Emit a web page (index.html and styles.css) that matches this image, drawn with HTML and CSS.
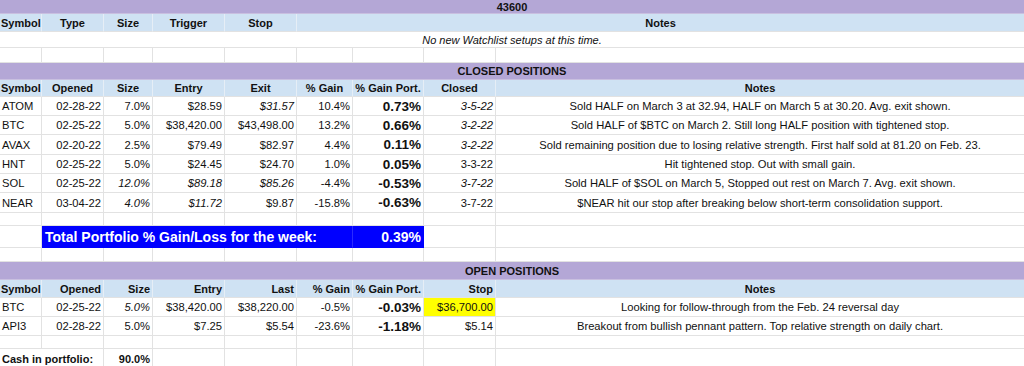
FILE: index.html
```html
<!DOCTYPE html>
<html lang="en">
<head>
<meta charset="utf-8">
<title>43600</title>
<link rel="stylesheet" href="styles.css">
</head>
<body>
<div class="sheet">
  <div class="row h14"><div class="cell purple ctr b s9">43600</div></div>
  <div class="row h18 head">
    <div class="cell l b">Symbol</div>
    <div class="cell ctr b">Type</div>
    <div class="cell ctr b">Size</div>
    <div class="cell ctr b">Trigger</div>
    <div class="cell ctr b">Stop</div>
    <div class="cell ctr b s4">Notes</div>
  </div>
  <div class="row h16"><div class="cell ctr i s9">No new Watchlist setups at this time.</div></div>
  <div class="row h15">
    <div class="cell"></div><div class="cell"></div><div class="cell"></div><div class="cell"></div><div class="cell"></div><div class="cell"></div><div class="cell"></div><div class="cell"></div><div class="cell"></div>
  </div>

  <div class="row h17"><div class="cell purple ctr b s9">CLOSED POSITIONS</div></div>
  <div class="row h17 head">
    <div class="cell l b">Symbol</div>
    <div class="cell ctr b">Opened</div>
    <div class="cell ctr b">Size</div>
    <div class="cell ctr b">Entry</div>
    <div class="cell ctr b">Exit</div>
    <div class="cell ctr b">% Gain</div>
    <div class="cell ctr b">% Gain Port.</div>
    <div class="cell ctr b">Closed</div>
    <div class="cell ctr b">Notes</div>
  </div>
  <div class="row h19 data">
    <div class="cell l">ATOM</div><div class="cell r">02-28-22</div><div class="cell r">7.0%</div><div class="cell r">$28.59</div><div class="cell r i">$31.57</div><div class="cell r">10.4%</div><div class="cell r big">0.73%</div><div class="cell r i">3-5-22</div>
    <div class="cell ctr">Sold HALF on March 3 at 32.94, HALF on March 5 at 30.20. Avg. exit shown.</div>
  </div>
  <div class="row h19 data">
    <div class="cell l">BTC</div><div class="cell r">02-25-22</div><div class="cell r">5.0%</div><div class="cell r">$38,420.00</div><div class="cell r">$43,498.00</div><div class="cell r">13.2%</div><div class="cell r big">0.66%</div><div class="cell r i">3-2-22</div>
    <div class="cell ctr">Sold HALF of $BTC on March 2. Still long HALF position with tightened stop.</div>
  </div>
  <div class="row h20 data">
    <div class="cell l">AVAX</div><div class="cell r">02-20-22</div><div class="cell r">2.5%</div><div class="cell r">$79.49</div><div class="cell r">$82.97</div><div class="cell r">4.4%</div><div class="cell r big">0.11%</div><div class="cell r i">3-2-22</div>
    <div class="cell ctr">Sold remaining position due to losing relative strength. First half sold at 81.20 on Feb. 23.</div>
  </div>
  <div class="row h19 data">
    <div class="cell l">HNT</div><div class="cell r">02-25-22</div><div class="cell r">5.0%</div><div class="cell r">$24.45</div><div class="cell r">$24.70</div><div class="cell r">1.0%</div><div class="cell r big">0.05%</div><div class="cell r">3-3-22</div>
    <div class="cell ctr">Hit tightened stop. Out with small gain.</div>
  </div>
  <div class="row h19 data">
    <div class="cell l">SOL</div><div class="cell r">02-25-22</div><div class="cell r i">12.0%</div><div class="cell r i">$89.18</div><div class="cell r i">$85.26</div><div class="cell r">-4.4%</div><div class="cell r big">-0.53%</div><div class="cell r i">3-7-22</div>
    <div class="cell ctr">Sold HALF of $SOL on March 5, Stopped out rest on March 7. Avg. exit shown.</div>
  </div>
  <div class="row h20 data">
    <div class="cell l">NEAR</div><div class="cell r">03-04-22</div><div class="cell r i">4.0%</div><div class="cell r i">$11.72</div><div class="cell r">$9.87</div><div class="cell r">-15.8%</div><div class="cell r big">-0.63%</div><div class="cell r">3-7-22</div>
    <div class="cell ctr">$NEAR hit our stop after breaking below short-term consolidation support.</div>
  </div>
  <div class="row h13">
    <div class="cell"></div><div class="cell"></div><div class="cell"></div><div class="cell"></div><div class="cell"></div><div class="cell"></div><div class="cell"></div><div class="cell"></div><div class="cell"></div>
  </div>
  <div class="row h22">
    <div class="cell"></div>
    <div class="cell blue total-label s5">Total Portfolio % Gain/Loss for the week:</div>
    <div class="cell blue total-value r">0.39%</div>
    <div class="cell"></div>
    <div class="cell"></div>
  </div>
  <div class="row h14">
    <div class="cell"></div><div class="cell"></div><div class="cell"></div><div class="cell"></div><div class="cell"></div><div class="cell"></div><div class="cell"></div><div class="cell"></div><div class="cell"></div>
  </div>

  <div class="row h18"><div class="cell purple ctr b s9">OPEN POSITIONS</div></div>
  <div class="row h18 head">
    <div class="cell l b">Symbol</div>
    <div class="cell r b">Opened</div>
    <div class="cell r b">Size</div>
    <div class="cell r b">Entry</div>
    <div class="cell r b">Last</div>
    <div class="cell r b">% Gain</div>
    <div class="cell r b">% Gain Port.</div>
    <div class="cell r b">Stop</div>
    <div class="cell ctr b">Notes</div>
  </div>
  <div class="row h19 data">
    <div class="cell l">BTC</div><div class="cell r">02-25-22</div><div class="cell r i">5.0%</div><div class="cell r">$38,420.00</div><div class="cell r">$38,220.00</div><div class="cell r">-0.5%</div><div class="cell r big">-0.03%</div><div class="cell r yellow">$36,700.00</div>
    <div class="cell ctr">Looking for follow-through from the Feb. 24 reversal day</div>
  </div>
  <div class="row h19 data">
    <div class="cell l">API3</div><div class="cell r">02-28-22</div><div class="cell r">5.0%</div><div class="cell r">$7.25</div><div class="cell r">$5.54</div><div class="cell r">-23.6%</div><div class="cell r big">-1.18%</div><div class="cell r">$5.14</div>
    <div class="cell ctr">Breakout from bullish pennant pattern. Top relative strength on daily chart.</div>
  </div>
  <div class="row h13">
    <div class="cell"></div><div class="cell"></div><div class="cell"></div><div class="cell"></div><div class="cell"></div><div class="cell"></div><div class="cell"></div><div class="cell"></div><div class="cell"></div>
  </div>
  <div class="row h20">
    <div class="cell l b s2">Cash in portfolio:</div>
    <div class="cell r b">90.0%</div>
    <div class="cell"></div><div class="cell"></div><div class="cell"></div><div class="cell"></div><div class="cell"></div><div class="cell"></div>
  </div>
</div>
</body>
</html>
```
FILE: styles.css
```css
html, body {
  margin: 0;
  padding: 0;
  background: #ffffff;
  overflow: hidden;
}

.sheet {
  width: 1024px;
  font-family: "Liberation Sans", Arial, sans-serif;
  font-size: 11px;
  color: #111111;
}

.row {
  display: grid;
  grid-template-columns: 42px 62px 49px 72px 72px 56px 71px 72px 528px;
}

.h13 { height: 13px; }
.h14 { height: 14px; }
.h15 { height: 15px; }
.h16 { height: 16px; }
.h17 { height: 17px; }
.h18 { height: 18px; }
.h19 { height: 19px; }
.h20 { height: 20px; }
.h22 { height: 22px; }

.cell {
  box-sizing: border-box;
  border-right: 1px solid #e2e2e2;
  border-bottom: 1px solid #e2e2e2;
  display: flex;
  align-items: center;
  padding: 0 2px;
  white-space: nowrap;
  overflow: visible;
  min-width: 0;
}

.row > .cell:last-child { border-right: none; }

.data { font-size: 11.2px; }

.s2 { grid-column: span 2; }
.s4 { grid-column: span 4; }
.s5 { grid-column: span 5; }
.s9 { grid-column: span 9; }

.l { justify-content: flex-start; }
.r { justify-content: flex-end; }
.ctr { justify-content: center; }
.b { font-weight: bold; }
.i { font-style: italic; }

.data .big {
  font-weight: bold;
  font-size: 13.5px;
}

.head { background: #cfe2f3; }
.head .cell { border-right-color: #e6eef6; border-bottom-color: #e2e2e2; }
.head .cell.l { padding-left: 1px; }

.purple {
  background: #b4a7d6;
  border-bottom-color: #c9c0e0;
}

.blue {
  background: #0000ff;
  color: #ffffff;
  font-weight: bold;
  font-size: 14px;
  border-bottom-color: #0000ff;
}

.total-label { border-right-color: #2a2aff; padding-left: 3px; }
.total-value { border-right-color: #0000ff; padding-right: 2px; }

.yellow { background: #ffff00; }
```
